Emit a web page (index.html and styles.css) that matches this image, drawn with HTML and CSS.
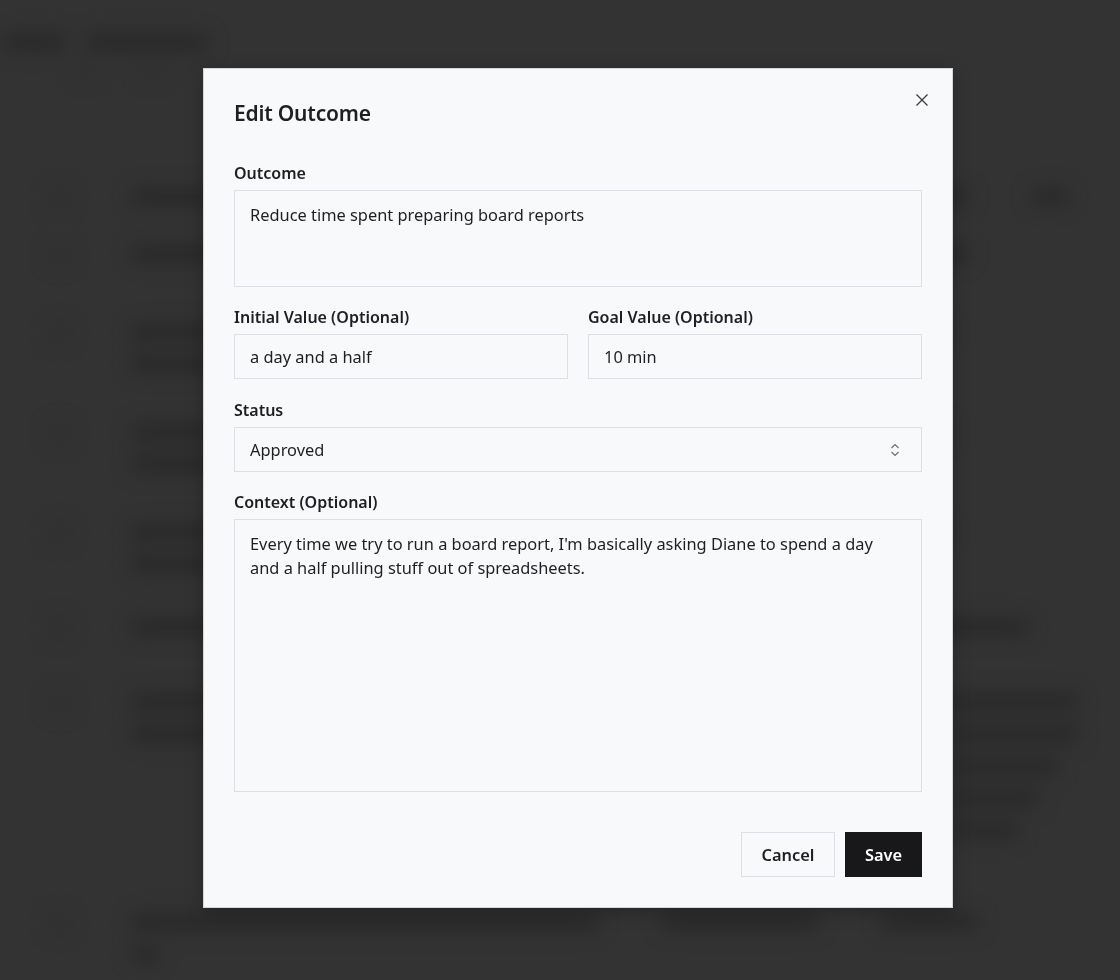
FILE: index.html
```html
<!DOCTYPE html>
<html lang="en">
<head>
  <meta charset="UTF-8">
  <meta name="viewport" content="width=device-width, initial-scale=1.0">
  <title>Edit Outcome</title>
  <link rel="stylesheet" href="styles.css">
</head>
<body>
  <!-- Page behind the dialog, dimmed and blurred -->
  <div id="page" aria-hidden="true">
    <div class="page-head">
      <span class="blob w65"></span>
      <span class="blob w125"></span>
    </div>
    <div class="page-sub">
      <span class="blob sm w20"></span>
      <span class="blob sm w25"></span>
    </div>
    <div class="rows">
      <div class="row h57"><span class="dot"></span><span class="blob w840"></span><span class="blob w40"></span></div>
      <div class="row h78"><span class="dot"></span><span class="blob w840"></span></div>
      <div class="row h100"><span class="dot"></span><div class="lines"><span class="blob w820"></span><span class="blob w700"></span></div></div>
      <div class="row h100"><span class="dot"></span><div class="lines"><span class="blob w820"></span><span class="blob w700"></span></div></div>
      <div class="row h95"><span class="dot"></span><div class="lines"><span class="blob w820"></span><span class="blob w700"></span></div></div>
      <div class="row h75"><span class="dot"></span><span class="blob w900"></span></div>
      <div class="row h220"><span class="dot"></span><div class="lines"><span class="blob w820"></span><span class="blob w700"></span></div><div class="side"><span class="blob w130"></span><span class="blob w130"></span><span class="blob w110"></span><span class="blob w90"></span><span class="blob w70"></span></div></div>
      <div class="row h57"><span class="dot"></span><div class="lines"><span class="blob w470"></span><span class="blob w30"></span></div><span class="blob w160"></span><span class="blob w100"></span></div>
    </div>
  </div>

  <div id="overlay">
    <div class="modal" role="dialog" aria-labelledby="modal-title">
      <div class="modal-head">
        <h2 id="modal-title">Edit Outcome</h2>
        <button class="close" title="Close">
          <svg viewBox="0 0 14 14"><path d="M1.5 1.5l11 11M12.5 1.5l-11 11"/></svg>
        </button>
      </div>

      <div class="field first">
        <label for="outcome">Outcome</label>
        <textarea id="outcome" class="short">Reduce time spent preparing board reports</textarea>
      </div>

      <div class="field-pair">
        <div class="field">
          <label for="initial">Initial Value (Optional)</label>
          <input id="initial" type="text" value="a day and a half">
        </div>
        <div class="field">
          <label for="goal">Goal Value (Optional)</label>
          <input id="goal" type="text" value="10 min">
        </div>
      </div>

      <div class="field status">
        <label for="status">Status</label>
        <div class="select" id="status">
          <span>Approved</span>
          <svg viewBox="0 0 10 16"><path d="M1.5 6l3.5-3.5L8.5 6M1.5 10l3.5 3.5L8.5 10"/></svg>
        </div>
      </div>

      <div class="field">
        <label for="context">Context (Optional)</label>
        <textarea id="context" class="long">Every time we try to run a board report, I'm basically asking Diane to spend a day and a half pulling stuff out of spreadsheets.</textarea>
      </div>

      <div class="actions">
        <button class="btn cancel">Cancel</button>
        <button class="btn save">Save</button>
      </div>
    </div>
  </div>
</body>
</html>
```

FILE: styles.css
```css
body {
  margin: 0;
  height: 980px;
  overflow: hidden;
  background: #333333;
  font-family: 'Noto Sans', 'Open Sans', sans-serif;
  color: #1f1f23;
}

/* Background page (blurred) */
#page {
  filter: blur(9px);
  padding-top: 32px;
}
.blob {
  display: block;
  height: 20px;
  border-radius: 10px;
  background: #2a2a2a;
  flex: none;
}
.blob.sm { height: 12px; background: #2f2f2f; }
.w20 { width: 20px; } .w25 { width: 25px; } .w30 { width: 30px; }
.w40 { width: 40px; } .w65 { width: 65px; } .w70 { width: 70px; }
.w90 { width: 90px; } .w100 { width: 100px; } .w110 { width: 110px; }
.w125 { width: 125px; } .w130 { width: 130px; } .w160 { width: 160px; }
.w470 { width: 470px; } .w700 { width: 700px; } .w820 { width: 820px; }
.w840 { width: 840px; } .w900 { width: 900px; }
.page-head { display: flex; gap: 18px; padding-left: 2px; }
.page-sub { display: flex; gap: 45px; padding: 14px 0 0 75px; }
.rows {
  display: flex;
  flex-direction: column;
  padding: 109px 0 0 48px;
}
.row { display: flex; align-items: flex-start; gap: 60px; flex: none; }
.h57 { height: 57px; } .h75 { height: 75px; } .h78 { height: 78px; }
.h95 { height: 95px; } .h100 { height: 100px; } .h220 { height: 220px; }
.dot {
  width: 22px; height: 22px;
  border-radius: 50%;
  background: #303030;
  flex: none;
}
.lines { display: flex; flex-direction: column; gap: 12px; }
.side { display: flex; flex-direction: column; gap: 12px; margin-left: -60px; }

/* Dialog */
#overlay {
  position: fixed;
  inset: 0;
  display: flex;
  justify-content: center;
  align-items: flex-start;
  padding: 68px 0 0 36px;
}
.modal {
  width: 688px;
  padding: 28px 30px 30px;
  background: #f8f9fb;
  border: 1px solid #d4d6dc;
  box-shadow: 0 4px 16px rgba(0,0,0,0.25);
}
.modal-head {
  display: flex;
  justify-content: space-between;
  align-items: flex-start;
}
.modal-head h2 {
  margin: 0;
  font-size: 21px;
  font-weight: 600;
  line-height: 32px;
  letter-spacing: -0.2px;
}
.close {
  border: none;
  background: none;
  padding: 0;
  margin: -7px -10px 0 0;
  width: 20px;
  height: 20px;
  display: flex;
  align-items: center;
  justify-content: center;
  cursor: pointer;
}
.close svg { width: 14px; height: 14px; stroke: #3c3c42; stroke-width: 1.3; fill: none; }

.field { display: flex; flex-direction: column; margin-top: 19px; }
.field.first { margin-top: 33px; }
.field.status { margin-top: 20px; }
.field label {
  font-size: 16px;
  font-weight: 600;
  line-height: 22px;
  margin-bottom: 6px;
}
.field-pair { display: grid; grid-template-columns: 1fr 1fr; gap: 20px; }

textarea, input, .select {
  box-sizing: border-box;
  width: 100%;
  border: 1px solid #dcdfe5;
  background: #f8f9fb;
  font: inherit;
  font-size: 16.4px;
  color: #1f1f23;
  line-height: 24px;
  border-radius: 0;
  outline: none;
}
textarea { resize: none; padding: 12px 15px; }
textarea.short { height: 97px; }
textarea.long { height: 273px; }
input, .select { height: 45px; padding: 0 15px; }
.select {
  display: flex;
  align-items: center;
  justify-content: space-between;
}
.select svg { width: 10px; height: 16px; stroke: #6b6e76; stroke-width: 1.2; fill: none; margin-right: 6px; }

.actions {
  display: flex;
  justify-content: flex-end;
  gap: 10px;
  margin-top: 40px;
}
.btn {
  height: 45px;
  font: inherit;
  font-size: 16.4px;
  font-weight: 600;
  cursor: pointer;
  border-radius: 0;
}
.cancel {
  width: 94px;
  background: #f8f9fb;
  border: 1px solid #dcdfe5;
  color: #1f1f23;
}
.save {
  width: 77px;
  background: #18181b;
  border: 1px solid #18181b;
  color: #ffffff;
}
```
